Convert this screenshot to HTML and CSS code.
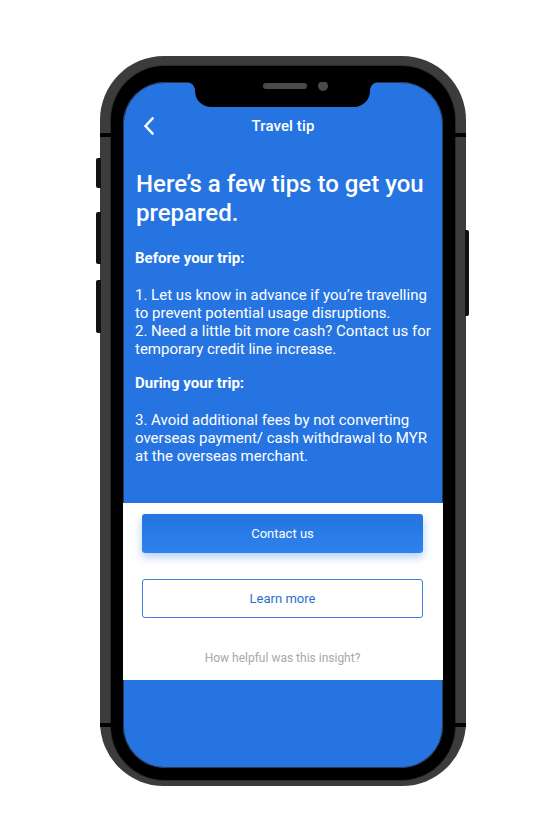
FILE: index.html
```html
<!DOCTYPE html>
<html lang="en">
<head>
<meta charset="utf-8">
<title>Travel tip</title>
<link rel="stylesheet" href="styles.css">
</head>
<body>
<div class="stage">
  <div class="phone">
    <span class="side-btn left b1"></span>
    <span class="side-btn left b2"></span>
    <span class="side-btn left b3"></span>
    <span class="side-btn right b4"></span>
    <span class="antenna l top"></span>
    <span class="antenna r top"></span>
    <span class="antenna l bottom"></span>
    <span class="antenna r bottom"></span>
    <div class="bezel">
      <div class="screen">
        <div class="notch">
          <span class="speaker"></span>
          <span class="camera"></span>
        </div>
        <header class="topbar">
          <svg class="back" width="14" height="20" viewBox="0 0 14 20" aria-hidden="true">
            <path d="M10.5 2.5 L3.5 10 L10.5 17.5" fill="none" stroke="#fff" stroke-width="2.4" stroke-linecap="square" stroke-linejoin="miter"/>
          </svg>
          <span class="title">Travel tip</span>
        </header>
        <section class="tips">
          <h1 class="headline">Here’s a few tips to get you prepared.</h1>
          <p class="label">Before your trip:</p>
          <p class="body">1. Let us know in advance if you’re travelling to prevent potential usage disruptions.<br>2. Need a little bit more cash? Contact us for temporary credit line increase.</p>
          <p class="label">During your trip:</p>
          <p class="body">3. Avoid additional fees by not converting overseas payment/ cash withdrawal to MYR at the overseas merchant.</p>
        </section>
        <section class="actions">
          <button class="btn primary">Contact us</button>
          <button class="btn outline">Learn more</button>
          <p class="feedback">How helpful was this insight?</p>
        </section>
      </div>
    </div>
  </div>
</div>
</body>
</html>
```

FILE: styles.css
```css
* { box-sizing: border-box; }
html, body { margin: 0; padding: 0; background: #ffffff; }
body { width: 560px; height: 840px; overflow: hidden; font-family: Roboto, "Noto Sans", sans-serif; }

.stage { padding: 56px 0 0 100px; }

.phone {
  position: relative;
  width: 366px;
  height: 730px;
  background: #3c3c3c;
  border-radius: 64px;
  padding: 10px 11px 6px 11px;
}
.bezel {
  width: 100%;
  height: 100%;
  background: #000;
  border-radius: 54px;
  padding: 16px 12px 12px 12px;
  box-shadow: 0 0 0 1px #2a2a2a;
}
.screen {
  position: relative;
  width: 100%;
  height: 100%;
  background: #2674e1;
  border-radius: 42px;
  overflow: hidden;
  display: flex;
  flex-direction: column;
  box-shadow: inset 0 0 0 1px #2a3a55;
}

.side-btn { position: absolute; background: #111; border-radius: 2px 0 0 2px; }
.side-btn.left { left: -4px; width: 5px; }
.side-btn.right { right: -3px; width: 4px; border-radius: 0 2px 2px 0; }
.b1 { top: 102px; height: 30px; }
.b2 { top: 156px; height: 52px; }
.b3 { top: 224px; height: 53px; }
.b4 { top: 174px; height: 86px; }

.antenna { position: absolute; width: 11px; height: 4px; background: #000; }
.antenna.l { left: 0; }
.antenna.r { right: 0; }
.antenna.top { top: 77px; }
.antenna.bottom { top: 667px; }

.notch {
  position: absolute;
  top: 0;
  left: 72px;
  width: 175px;
  height: 25px;
  background: #000;
  border-radius: 0 0 16px 16px;
}
.notch::before, .notch::after {
  content: "";
  position: absolute;
  top: 0;
  width: 8px;
  height: 8px;
}
.notch::before { left: -8px; background: radial-gradient(circle at 0 100%, transparent 7.5px, #000 8px); }
.notch::after { right: -8px; background: radial-gradient(circle at 100% 100%, transparent 7.5px, #000 8px); }
.speaker {
  position: absolute;
  top: 1px;
  left: 68px;
  width: 44px;
  height: 6px;
  border-radius: 3px;
  background: #4a4a4a;
}
.camera {
  position: absolute;
  top: -1px;
  left: 123px;
  width: 10px;
  height: 10px;
  border-radius: 50%;
  background: #4a4a4a;
}

.topbar {
  margin-top: 30px;
  height: 28px;
  display: flex;
  align-items: center;
  justify-content: center;
  position: relative;
  color: #fff;
}
.back { position: absolute; left: 19px; top: 4px; }
.title { font-size: 15px; font-weight: 500; letter-spacing: 0.1px; }

.tips { padding: 30px 8px 0 12px; color: #fff; flex: 1; }
.headline {
  margin: 0 0 21px 0;
  font-size: 24px;
  font-weight: 500;
  line-height: 29px;
  padding-left: 1px;
}
.label {
  margin: 0 0 19px 0;
  font-size: 15px;
  font-weight: 700;
  line-height: 18px;
}
.body {
  margin: 0 0 16px 0;
  font-size: 15px;
  line-height: 18px;
}

.actions {
  background: #fff;
  height: 177px;
  margin-bottom: 88px;
  padding: 11px 20px 0 19px;
  display: flex;
  flex-direction: column;
  align-items: stretch;
}
.btn {
  height: 39px;
  border-radius: 3px;
  font-family: Roboto, "Noto Sans", sans-serif;
  font-size: 13px;
  cursor: pointer;
}
.btn.primary {
  border: none;
  color: #fff;
  background: linear-gradient(180deg, #2574e0 0%, #2e82ee 100%);
  box-shadow: 0 4px 10px rgba(38, 116, 225, 0.35);
}
.btn.outline {
  margin-top: 26px;
  border: 1px solid #3b7fdb;
  background: #fff;
  color: #2b6fd3;
}
.feedback {
  margin: 33px 0 0 0;
  text-align: center;
  font-size: 12px;
  color: #a8a8a8;
}
```
